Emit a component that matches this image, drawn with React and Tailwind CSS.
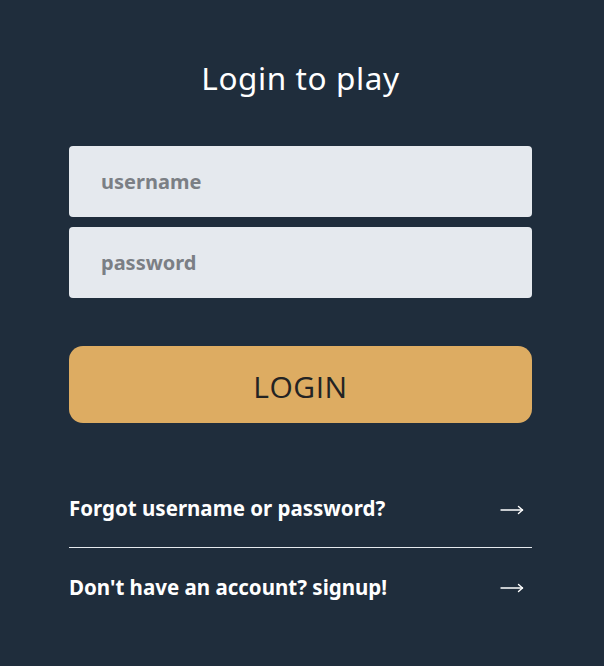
import React from "react";

function Arrow() {
  return (
    <svg width="24" height="12" viewBox="0 0 24 12" className="mr-[8px] mt-[2px]" fill="none" stroke="white" strokeWidth="1.4" strokeLinecap="round" strokeLinejoin="round">
      <path d="M1 6 H22.5" />
      <path d="M18.5 2.5 L22.5 6 L18.5 9.5" />
    </svg>
  );
}

export default function App() {
  return (
    <div className="w-[604px] h-[666px] bg-[#1f2d3c] pl-[69px]" style={{ fontFamily: '"Noto Sans", "Open Sans", sans-serif' }}>
      <div className="w-[463px] flex flex-col items-center">
        <h1 className="mt-[55px] text-[31.5px] leading-[46px] text-white tracking-[0.6px]">Login to play</h1>
        <div className="mt-[45px] w-[463px] flex flex-col gap-[10px]">
          <input
            placeholder="username"
            className="h-[71px] w-full rounded-[4px] bg-[#e5e9ee] pl-[32px] text-[20px] font-bold text-[#333] placeholder:text-[#7b7f85] outline-none"
          />
          <input
            placeholder="password"
            type="password"
            className="h-[71px] w-full rounded-[4px] bg-[#e5e9ee] pl-[32px] text-[20px] font-bold text-[#333] placeholder:text-[#7b7f85] outline-none"
          />
        </div>
        <button className="mt-[48px] w-[463px] h-[77px] rounded-[14px] bg-[#ddac62] text-[30px] pt-[3px] text-[#232323] tracking-[0.5px]" style={{ fontFamily: '"Open Sans", sans-serif' }}>
          LOGIN
        </button>
        <div className="mt-[47px] w-[463px] flex flex-col">
          <div className="h-[78px] flex items-center justify-between border-b border-[#e5e9ee]">
            <span className="text-[20.5px] font-bold text-white">Forgot username or password?</span>
            <Arrow />
          </div>
          <div className="h-[78px] flex items-center justify-between">
            <span className="text-[20.5px] font-bold text-white">Don't have an account? signup!</span>
            <Arrow />
          </div>
        </div>
      </div>
    </div>
  );
}
